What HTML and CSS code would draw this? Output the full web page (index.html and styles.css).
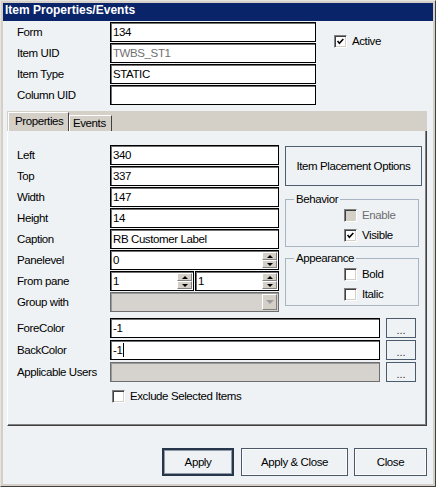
FILE: index.html
```html
<!DOCTYPE html>
<html lang="en">
<head>
  <meta charset="UTF-8" />
  <title>Item Properties/Events</title>
  <link rel="stylesheet" href="styles.css">
</head>
<body>

<div class="window">
  <div class="titlebar">Item Properties/Events</div>

  <div class="dialog">

    <div class="head">
      <div class="grid head-fields">
        <span class="lbl">Form</span>
        <div class="field">134</div>
        <span class="lbl">Item UID</span>
        <div class="field ro">TWBS_ST1</div>
        <span class="lbl">Item Type</span>
        <div class="field">STATIC</div>
        <span class="lbl">Column UID</span>
        <div class="field"></div>
      </div>
      <label class="check active"><span class="box"><svg viewBox="0 0 13 13"><polyline points="3,6 5.2,8.5 9.8,3.6" /></svg></span>Active</label>
    </div>

    <div class="tabs">
      <div class="tabstrip">
        <span class="tab tab-props on">Properties</span>
        <span class="tab tab-events">Events</span>
      </div>

      <div class="panel">
        <div class="upper">
          <div class="grid fields">
            <span class="lbl">Left</span>
            <div class="field">340</div>
            <span class="lbl">Top</span>
            <div class="field">337</div>
            <span class="lbl">Width</span>
            <div class="field">147</div>
            <span class="lbl">Height</span>
            <div class="field">14</div>
            <span class="lbl">Caption</span>
            <div class="field">RB Customer Label</div>
            <span class="lbl">Panelevel</span>
            <div class="field spin">0<span class="spinner"><i class="up"></i><i class="dn"></i></span></div>
            <span class="lbl">From pane</span>
            <div class="pair">
              <div class="field spin">1<span class="spinner"><i class="up"></i><i class="dn"></i></span></div>
              <div class="field spin">1<span class="spinner"><i class="up"></i><i class="dn"></i></span></div>
            </div>
            <span class="lbl">Group with</span>
            <div class="field off combo"><span class="drop"><i></i></span></div>
          </div>

          <div class="side">
            <button class="place-btn">Item Placement Options</button>
            <fieldset class="group">
              <legend>Behavior</legend>
              <label class="check opt dim"><span class="box dis"></span>Enable</label>
              <label class="check opt"><span class="box"><svg viewBox="0 0 13 13"><polyline points="3,6 5.2,8.5 9.8,3.6" /></svg></span>Visible</label>
            </fieldset>
            <fieldset class="group">
              <legend>Appearance</legend>
              <label class="check opt"><span class="box"></span>Bold</label>
              <label class="check opt"><span class="box"></span>Italic</label>
            </fieldset>
          </div>
        </div>

        <div class="lower">
          <div class="row">
            <span class="lbl">ForeColor</span>
            <div class="field wide">-1</div>
            <button class="dots">...</button>
          </div>
          <div class="row">
            <span class="lbl">BackColor</span>
            <div class="field wide">-1<span class="caret"></span></div>
            <button class="dots">...</button>
          </div>
          <div class="row">
            <span class="lbl">Applicable Users</span>
            <div class="field wide off"></div>
            <button class="dots">...</button>
          </div>
        </div>

        <label class="check exclude"><span class="box"></span>Exclude Selected Items</label>
      </div>
    </div>

    <div class="actions">
      <button class="btn default btn-apply">Apply</button>
      <button class="btn btn-apply-close">Apply &amp; Close</button>
      <button class="btn btn-close">Close</button>
    </div>

  </div>
</div>

</body>
</html>
```

FILE: styles.css
```css
body {
  margin: 0;
  font-family: "Liberation Sans", Arial, sans-serif;
  font-size: 11.5px;
  letter-spacing: -0.4px;
  color: #000;
  background: #fff;
}

button {
  font: inherit;
  letter-spacing: inherit;
  color: #000;
  cursor: default;
  white-space: nowrap;
}

.window {
  width: 436px;
  height: 487px;
  box-sizing: border-box;
  background: #d4d0c8;
  border: 1px solid;
  border-color: #e6e4e0 #404040 #404040 #e6e4e0;
  padding: 2px;
  display: flex;
  flex-direction: column;
}

.titlebar {
  height: 18px;
  line-height: 18px;
  padding-left: 2px;
  background: #0a246a;
  color: #fff;
  font: bold 12px "Liberation Sans", Arial, sans-serif;
  letter-spacing: 0;
}

.dialog {
  flex: 1;
  background: #eef2f5;
  padding: 1px 6px 0 4px;
  display: flex;
  flex-direction: column;
}

/* label + field grids */
.grid {
  display: grid;
  grid-auto-rows: 20px;
  row-gap: 1px;
  align-items: center;
}

.lbl {
  line-height: 20px;
  white-space: nowrap;
}

.field {
  position: relative;
  height: 20px;
  box-sizing: border-box;
  border: 1px solid #000;
  box-shadow: inset 1px 1px 0 #707070;
  background: #fff;
  padding-left: 2px;
  line-height: 18px;
  white-space: nowrap;
}

.field.ro { color: #707070; }

.field.off {
  background: #d6d3ce;
  border-color: #6e6e6e;
  box-shadow: inset 1px 1px 0 #9a9a9a;
}

.caret {
  display: inline-block;
  width: 1px;
  height: 14px;
  margin-left: 1px;
  background: #000;
  vertical-align: -3px;
}

/* top part */
.head {
  display: flex;
  margin-left: 10px;
}

.head-fields {
  grid-template-columns: 93px 206px;
}

.check {
  display: flex;
  align-items: center;
  gap: 5px;
  height: 20px;
}

.box {
  width: 13px;
  height: 13px;
  flex: none;
  box-sizing: border-box;
  border: 1px solid;
  border-color: #808080 #fff #fff #808080;
  box-shadow: inset 1px 1px 0 #404040, inset -1px -1px 0 #d4d0c8;
  background: #fff;
}

.box.dis { background: #d4d0c8; }
.dim { color: #6d6d6d; }

.box svg {
  display: block;
  width: 11px;
  height: 11px;
}

.box polyline {
  fill: none;
  stroke: #000;
  stroke-width: 1.9;
}

.active {
  margin: 9px 0 0 18px;
}

/* tabs */
.tabs {
  margin-top: 6px;
}

.tabstrip {
  height: 20px;
  display: flex;
  align-items: flex-end;
  background: #d4d0c8;
  padding-left: 1px;
}

.tab {
  box-sizing: border-box;
  border-top: 1px solid #fff;
  border-left: 1px solid #fff;
  border-right: 1px solid #404040;
  background: #d4d0c8;
  white-space: nowrap;
}

.tab-props {
  width: 61px;
  height: 19px;
  line-height: 17px;
  padding-left: 6px;
}

.tab-events {
  width: 43px;
  height: 16px;
  line-height: 15px;
  padding-left: 3px;
}

.panel {
  border-left: 1px solid #fff;
  border-right: 1px solid #404040;
  border-bottom: 1px solid #404040;
  box-shadow: inset -1px -1px 0 #808080;
  padding: 14px 8px 19px 9px;
}

.upper {
  display: flex;
  gap: 6px;
}

.fields {
  grid-template-columns: 93px 169px;
}

.pair {
  display: flex;
  gap: 1px;
}

.pair .field { width: 84px; }

.spinner {
  position: absolute;
  right: 1px;
  top: 1px;
  width: 15px;
  height: 16px;
  display: flex;
  flex-direction: column;
}

.spinner i,
.drop {
  flex: 1;
  display: flex;
  align-items: center;
  justify-content: center;
  box-sizing: border-box;
  background: #d4d0c8;
  border: 1px solid;
  border-color: #fff #808080 #808080 #fff;
}

.spinner .up::after,
.spinner .dn::after,
.drop i {
  content: "";
  border-left: 3px solid transparent;
  border-right: 3px solid transparent;
}

.spinner .up::after { border-bottom: 3px solid #000; }
.spinner .dn::after { border-top: 3px solid #000; }

.drop {
  position: absolute;
  right: 1px;
  top: 1px;
  width: 15px;
  height: 16px;
}

.drop i {
  border-left-width: 4px;
  border-right-width: 4px;
  border-top: 4px solid #9c9c9c;
}

/* right column */
.side {
  width: 137px;
}

.place-btn {
  display: block;
  width: 137px;
  height: 40px;
  margin-top: 1px;
  background: #eef2f5;
  border: 1px solid #4e5e70;
  padding: 0;
}

.group {
  width: 134px;
  box-sizing: border-box;
  margin: 6px 0 0;
  padding: 0 0 1px 8px;
  border: 1px solid #a8b6c4;
}

.group + .group { margin-top: 4px; }

.group legend {
  padding: 0 2px;
  line-height: 15px;
}

.opt { margin-left: 50px; }
.group .opt:first-of-type { margin-top: -2px; }

/* colour rows */
.lower {
  margin-top: 6px;
  display: flex;
  flex-direction: column;
  gap: 2px;
}

.row {
  display: flex;
  align-items: center;
}

.row .lbl { width: 93px; }
.field.wide { width: 270px; }

.dots {
  width: 30px;
  height: 20px;
  margin-left: 6px;
  padding: 0;
  border: 1px solid #4c5b6c;
  background: #eef2f5;
  color: #333;
  font-size: 11px;
  letter-spacing: 0;
  line-height: 22px;
}

.exclude {
  margin: 4px 0 0 95px;
}

/* bottom buttons */
.actions {
  display: flex;
  justify-content: flex-end;
  margin-top: 22px;
}

.btn {
  height: 28px;
  padding: 0;
  background: #eef2f5;
  border: 1px solid #4a5868;
  box-shadow: inset 0 0 0 1px #fbfcfd;
}

.btn.default {
  border: 2px solid #27364a;
  box-shadow: inset 0 0 0 1px #8d9aa8;
}

.btn-apply { width: 72px; }
.btn-apply-close { width: 107px; margin-left: 7px; }
.btn-close { width: 73px; margin-left: 6px; }
```
